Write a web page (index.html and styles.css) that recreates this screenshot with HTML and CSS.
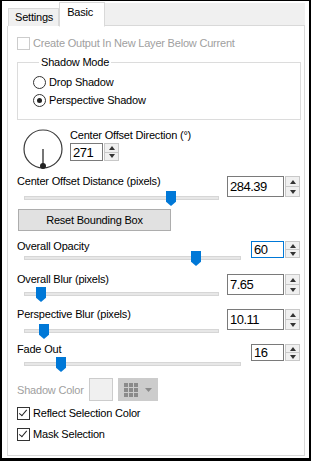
FILE: index.html
```html
<!DOCTYPE html>
<html lang="en">
<head>
  <meta charset="UTF-8">
  <title>Basic</title>
  <link rel="stylesheet" href="styles.css">
</head>
<body>

<!-- Dialog frame -->
<div class="frame">

  <!-- Tab header -->
  <div class="tabs">
    <div class="tab">Settings</div>
    <div class="tab active">Basic</div>
    <div class="tab-fill"></div>
  </div>

  <!-- Basic tab page -->
  <div class="panel">

    <label class="check disabled">
      <span class="box"></span>
      Create Output In New Layer Below Current
    </label>

    <fieldset class="group">
      <legend>Shadow Mode</legend>
      <div class="radio"><span class="dot"></span>Drop Shadow</div>
      <div class="radio"><span class="dot on"></span>Perspective Shadow</div>
    </fieldset>

    <!-- Direction dial -->
    <div class="dial-row">
      <svg class="dial" width="40" height="40" viewBox="0 0 40 40">
        <circle cx="20" cy="20" r="19" fill="none" stroke="#3c3c3c" stroke-width="1.2"/>
        <line x1="20" y1="20" x2="20" y2="37" stroke="#3c3c3c" stroke-width="1.4"/>
        <circle cx="20" cy="37" r="3" fill="#222"/>
      </svg>
      <div class="dial-side">
        <div class="label">Center Offset Direction (°)</div>
        <div class="spin narrow short">
          <div class="spin-box">271</div>
          <div class="spin-btns"><span class="up"></span><span class="down"></span></div>
        </div>
      </div>
    </div>

    <div class="srow r-dist">
      <div class="label">Center Offset Distance (pixels)</div>
      <div class="spin wide">
        <div class="spin-box">284.39</div>
        <div class="spin-btns"><span class="up"></span><span class="down"></span></div>
      </div>
      <div class="slider"><span class="thumb" style="left: 142px"></span></div>
    </div>

    <button class="reset-btn">Reset Bounding Box</button>

    <div class="srow long r-opac">
      <div class="label">Overall Opacity</div>
      <div class="spin narrow short">
        <div class="spin-box focus">60</div>
        <div class="spin-btns"><span class="up"></span><span class="down"></span></div>
      </div>
      <div class="slider"><span class="thumb" style="left: 167px"></span></div>
    </div>

    <div class="srow r-blur">
      <div class="label">Overall Blur (pixels)</div>
      <div class="spin wide">
        <div class="spin-box">7.65</div>
        <div class="spin-btns"><span class="up"></span><span class="down"></span></div>
      </div>
      <div class="slider"><span class="thumb" style="left: 12px"></span></div>
    </div>

    <div class="srow r-persp">
      <div class="label">Perspective Blur (pixels)</div>
      <div class="spin wide">
        <div class="spin-box">10.11</div>
        <div class="spin-btns"><span class="up"></span><span class="down"></span></div>
      </div>
      <div class="slider"><span class="thumb" style="left: 15px"></span></div>
    </div>

    <div class="srow long r-fade">
      <div class="label">Fade Out</div>
      <div class="spin narrow short">
        <div class="spin-box">16</div>
        <div class="spin-btns"><span class="up"></span><span class="down"></span></div>
      </div>
      <div class="slider"><span class="thumb" style="left: 32px"></span></div>
    </div>

    <!-- Shadow colour picker (disabled) -->
    <div class="color-row">
      <span class="color-label">Shadow Color</span>
      <span class="swatch"></span>
      <span class="palette-btn">
        <svg width="14" height="14" viewBox="0 0 14 14">
          <rect x="0" y="0" width="4" height="4" fill="#8a8a8a"/>
          <rect x="5" y="0" width="4" height="4" fill="#8a8a8a"/>
          <rect x="10" y="0" width="4" height="4" fill="#8a8a8a"/>
          <rect x="0" y="5" width="4" height="4" fill="#8a8a8a"/>
          <rect x="5" y="5" width="4" height="4" fill="#8a8a8a"/>
          <rect x="10" y="5" width="4" height="4" fill="#8a8a8a"/>
          <rect x="0" y="10" width="4" height="4" fill="#8a8a8a"/>
          <rect x="5" y="10" width="4" height="4" fill="#8a8a8a"/>
          <rect x="10" y="10" width="4" height="4" fill="#8a8a8a"/>
        </svg>
        <svg width="7" height="4" viewBox="0 0 7 4"><path d="M0 0 L7 0 L3.5 4 Z" fill="#8a8a8a"/></svg>
      </span>
    </div>

    <label class="check reflect">
      <span class="box checked"></span>
      Reflect Selection Color
    </label>
    <label class="check mask">
      <span class="box checked"></span>
      Mask Selection
    </label>

  </div>
</div>

</body>
</html>
```

FILE: styles.css
```css
body {
  margin: 0;
  background-color: #000;
  font-family: "Liberation Sans", Arial, sans-serif;
  font-size: 11px;
  letter-spacing: -0.2px;
  color: #000;
}
.frame {
  margin: 1px 2px 0 2px;
  height: 457px;
  background-color: #fff;
  padding: 0 4px 0 5px;
  box-sizing: border-box;
  display: flex;
  flex-direction: column;
}

/* Tabs */
.tabs {
  display: flex;
  align-items: flex-end;
  height: 25px;
}
.tab {
  height: 17px;
  padding: 0 5px 0 6px;
  line-height: 17px;
  background-color: #f0f0f0;
  border: 1px solid #d9d9d9;
  border-bottom: none;
  margin-left: 1px;
}
.tab.active {
  height: 23px;
  line-height: 19px;
  background-color: #fff;
  border-bottom: 1px solid #fff;
  margin-bottom: -1px;
  padding: 0 11px 0 7px;
  margin-left: 0;
  position: relative;
}
.tab-fill {
  flex: 1;
  height: 22px;
  background-color: #f0f0f0;
  border-bottom: 1px solid #d9d9d9;
}
.panel {
  flex: 1;
  border: 1px solid #d9d9d9;
  border-top: none;
  margin-bottom: 2px;
  padding: 11px 3px 0 9px;
}
.label {
  line-height: 14px;
  white-space: nowrap;
}

/* Checkboxes and radios */
.check {
  display: flex;
  align-items: center;
  gap: 3px;
  height: 13px;
  line-height: 13px;
}
.check.disabled {
  color: #a0a0a0;
}
.box {
  width: 11px;
  height: 11px;
  border: 1px solid #333;
  background-color: #fff;
  position: relative;
}
.check.disabled .box {
  border-color: #cccccc;
}
.box.checked::after {
  content: "";
  position: absolute;
  left: 3px;
  top: 0px;
  width: 3px;
  height: 7px;
  border: solid #222;
  border-width: 0 1px 1px 0;
  transform: rotate(40deg);
}
.group {
  margin: 6px 0 0 0;
  padding: 5px 0 0 15px;
  border: 1px solid #dcdcdc;
  height: 64px;
  box-sizing: border-box;
  min-width: 0;
}
.group legend {
  padding: 0 2px;
  margin-left: 6px;
}
.radio {
  display: flex;
  align-items: center;
  gap: 3px;
  height: 18px;
}
.dot {
  width: 11px;
  height: 11px;
  border: 1px solid #333;
  border-radius: 50%;
  position: relative;
}
.dot.on::after {
  content: "";
  position: absolute;
  left: 3px;
  top: 3px;
  width: 5px;
  height: 5px;
  border-radius: 50%;
  background-color: #222;
}

/* Dial */
.dial-row {
  display: flex;
  margin-top: 8px;
}
.dial {
  margin: 1px 0 0 6px;
}
.dial-side {
  margin-left: 7px;
  display: flex;
  flex-direction: column;
  gap: 1px;
}

/* Spinners */
.spin {
  display: flex;
  gap: 1px;
  height: 21px;
}
.spin.short {
  height: 17px;
}
.dial-side .spin.short {
  height: 18px;
}
.spin-box {
  border: 1px solid #7a7a7a;
  background-color: #fff;
  padding: 0 2px;
  font-size: 13px;
  letter-spacing: -0.5px;
  display: flex;
  align-items: center;
}
.spin.wide .spin-box {
  width: 51px;
}
.spin.narrow .spin-box {
  width: 27px;
}
.spin-box.focus {
  border-color: #0078d7;
}
.spin-btns {
  width: 15px;
  display: flex;
  flex-direction: column;
  border: 1px solid #c8c8c8;
  box-sizing: border-box;
}
.spin-btns span {
  flex: 1;
  background-color: #f0f0f0;
  position: relative;
}
.spin-btns span + span {
  border-top: 1px solid #c8c8c8;
}
.spin-btns .up::after,
.spin-btns .down::after {
  content: "";
  position: absolute;
  left: 4px;
  top: 50%;
  margin-top: -2px;
  border-left: 3px solid transparent;
  border-right: 3px solid transparent;
}
.spin-btns .up::after {
  border-bottom: 4px solid #333;
}
.spin-btns .down::after {
  border-top: 4px solid #333;
}

/* Slider rows */
.srow {
  display: grid;
  grid-template-columns: 1fr auto;
  margin-right: 1px;
}
.srow .label {
  grid-column: 1;
  grid-row: 1;
  margin-top: -2px;
}
.srow .spin {
  grid-column: 2;
  grid-row: 1 / span 2;
}
.srow .slider {
  grid-column: 1;
  grid-row: 2;
}
.slider {
  position: relative;
  width: 195px;
  height: 16px;
  margin-left: 7px;
}
.srow.long .slider {
  width: 217px;
}
.slider::before {
  content: "";
  position: absolute;
  left: 0;
  right: 0;
  top: 5px;
  height: 2px;
  background-color: #e7e7e7;
  border: 1px solid #d6d6d6;
}
.thumb {
  position: absolute;
  top: 0;
  width: 10px;
  height: 15px;
  background-color: #0078d7;
  clip-path: polygon(0 0, 100% 0, 100% 72%, 50% 100%, 0 72%);
}
.r-dist { margin-top: 7px; }
.r-dist .slider { margin-top: 3px; }
.r-opac { margin-top: 10px; }
.r-opac .slider { margin-top: -2px; }
.r-blur { margin-top: 7px; }
.r-blur .slider { margin-top: 1px; }
.r-persp { margin-top: 6px; }
.r-persp .slider { margin-top: 3px; }
.r-fade { margin-top: 4px; }
.r-fade .slider { margin-top: 1px; }

.reset-btn {
  display: block;
  width: 153px;
  height: 22px;
  margin: 2px 0 0 1px;
  padding: 0;
  background-color: #e1e1e1;
  border: 1px solid #adadad;
  font-family: inherit;
  font-size: 11px;
  letter-spacing: -0.2px;
  color: #000;
}

/* Shadow colour */
.color-row {
  display: flex;
  align-items: center;
  margin-top: 5px;
  height: 23px;
}
.color-label {
  color: #a0a0a0;
  width: 72px;
  white-space: nowrap;
}
.swatch {
  width: 22px;
  height: 21px;
  background-color: #f0f0f0;
  border: 1px solid #cccccc;
}
.palette-btn {
  margin-left: 5px;
  width: 40px;
  height: 23px;
  background-color: #cccccc;
  display: flex;
  align-items: center;
  justify-content: center;
  gap: 7px;
}
.check.reflect {
  margin-top: 6px;
}
.check.mask {
  margin-top: 8px;
}
```
